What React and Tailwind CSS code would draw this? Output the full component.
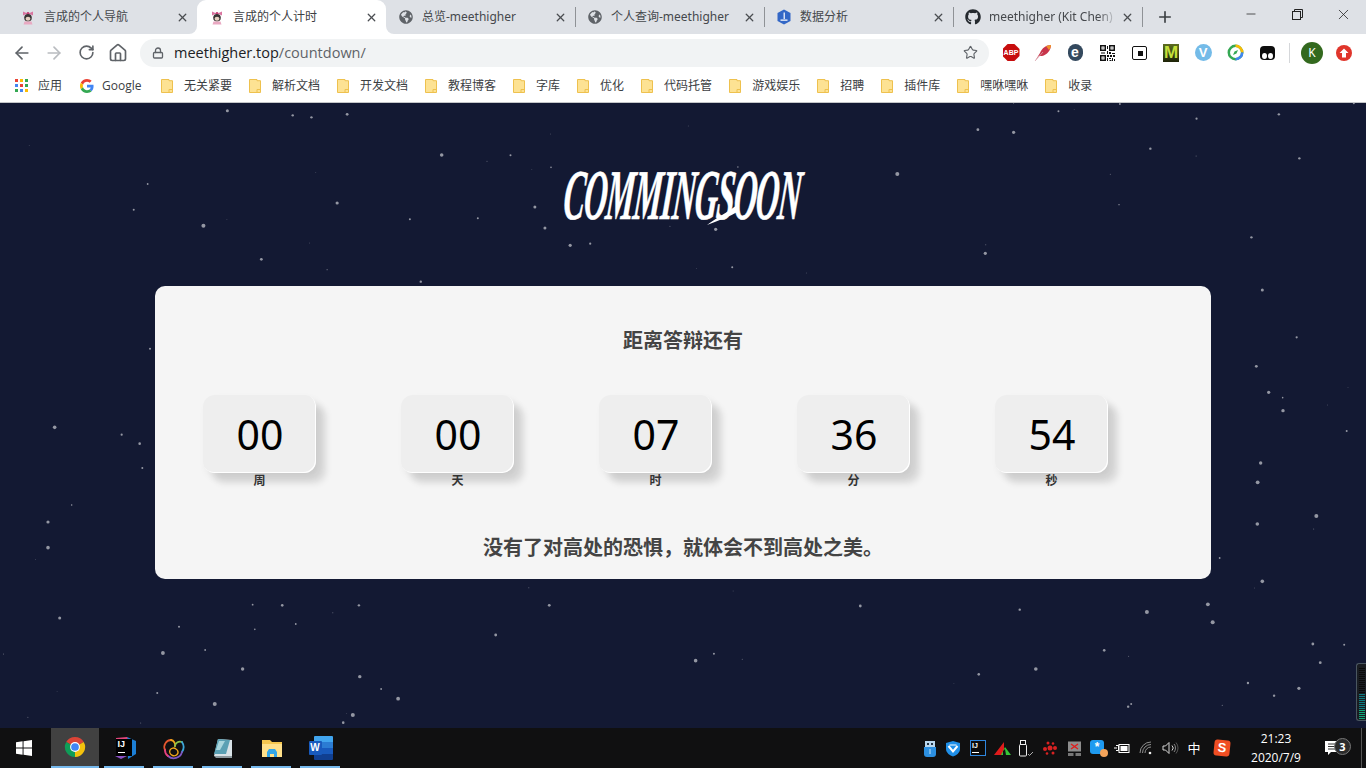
import React from "react";
import { ArrowLeft, ArrowRight, RotateCw, Home, Lock, Star, X, Plus, Minus } from "lucide-react";
import { FaGithub, FaGlobeAmericas } from "react-icons/fa";

const S1 = 1 / 2.2958, S3 = 1 / 3;
const raw = [
  [0, 102, S1, [[522,26,1.5],[672,40,1.2],[715,46,1.2],[797,37,1.4],[67,130,.4],[1014,159,1.8],[1172,160,1],[1118,178,.5],[1264,96,.4],[1221,202,.4],[1265,196,.8],[725,212,.4],[339,246,.9],[307,323,1],[774,303,1.6],[1228,315,1.5],[941,352,1],[1097,349,1],[521,352,.4],[467,371,2],[1251,378,1.5],[1538,373,.5],[711,423,.4],[1309,430,1.6],[1355,425,1.1],[600,472,1.4],[751,503,.6],[966,539,1.2]]],
  [683, 102, S1, [[759,4,.5],[1003,6,.9],[1540,4,1],[862,28,1],[898,22,.4],[1179,50,1.1],[1368,37,1.2],[12,72,.4],[677,83,1.4],[759,91,1.6],[1073,140,1.2],[1178,162,.5],[1415,169,1.2],[492,216,2],[981,217,.5],[126,195,.7],[153,332,.8],[1001,308,.7],[75,382,1.6],[1305,406,1.2],[695,428,.5],[694,454,1.6],[31,499,.4],[113,496,1],[283,513,.4]]],
  [0, 286, S3, [[450,188,1],[164,424,1.8],[365,446,1.1],[419,473,1.3],[427,546,1],[215,657,.8],[144,708,1.6],[144,785,1.8],[106,821,.4]]],
  [1211, 286, S3, [[154,12,1.5],[257,154,1.1],[136,241,1.4],[411,305,.4],[173,319,1.6],[215,335,.8],[349,357,.4],[216,374,1.7],[407,435,1],[149,531,1.7],[140,589,1.9],[316,690,2],[308,729,.5],[139,714,1.8],[26,816,.9]]],
  [0, 579, S1, [[1214,26,.5],[580,77,.9],[648,79,1.3],[824,79,1.2],[1261,79,1.4],[764,101,.5],[137,117,1.5],[411,143,1],[679,135,.9],[585,151,.8],[1138,168,1.4],[374,222,1.9],[471,213,.9],[8,225,.5],[557,270,1.7],[826,293,1.7],[875,330,.9],[131,338,.3],[361,342,1],[493,375,2],[914,359,1.9],[810,408,2],[796,403,.4],[64,415,.5],[323,432,.5],[788,431,1.3]]],
  [683, 579, S1, [[115,36,.4],[1330,7,1.8],[1312,27,.4],[407,81,1.4],[773,92,1.2],[1065,99,2],[1205,76,1.9],[1216,130,2],[1446,195,1.4],[1518,197,1],[967,214,1.3],[1023,232,.5],[71,224,1],[29,245,1.8],[136,241,.5],[810,270,1.8],[679,286,1.3],[622,314,.3],[1463,251,1.4],[1297,312,1.2],[1414,328,1.6],[1357,350,1.2],[1029,375,1],[1022,383,1.2],[1238,379,.6]]],
];
const stars = raw.flatMap(([ox, oy, sx, list]) =>
  list.map(([x, y, r]) => ({ x: ox + x * sx, y: oy + y * S3, r }))
);

const CJK = "font-['Noto_Sans','Noto_Sans_CJK_SC',sans-serif]";

function Minnie() {
  return (
    <svg width="16" height="16" viewBox="0 0 16 16" className="shrink-0">
      <path d="M3 2.500 L7.500 4.500 L3 6.500Z M13 2.500 L8.500 4.500 L13 6.500Z" fill="#d9749f" />
      <circle cx="8" cy="4.400" r="1.400" fill="#c23f75" />
      <circle cx="8" cy="8.800" r="3.800" fill="#3a3535" />
      <ellipse cx="8" cy="9.800" rx="2.400" ry="2" fill="#e3cfc0" />
      <path d="M4.500 12.500h7l1 3h-9z" fill="#e9a9c2" />
    </svg>
  );
}

function Analysis() {
  return (
    <svg width="16" height="16" viewBox="0 0 16 16" className="shrink-0">
      <path d="M8 0.500 L14.500 4 L14.500 12 L8 15.500 L1.500 12 L1.500 4Z" fill="#3367c6" />
      <path d="M7.600 3.500h1.200v6.500H7.600z M4.500 10.500h7v1.200h-7z" fill="#fff" />
    </svg>
  );
}

const tabs = [
  { t: "言成的个人导航", i: <Minnie /> },
  { t: "言成的个人计时", i: <Minnie />, active: true },
  { t: "总览-meethigher", i: <FaGlobeAmericas size={14} className="text-[#5f6368] shrink-0 mx-px" />, sep: true },
  { t: "个人查询-meethigher", i: <FaGlobeAmericas size={14} className="text-[#5f6368] shrink-0 mx-px" />, sep: true },
  { t: "数据分析", i: <Analysis />, sep: true },
  { t: "meethigher (Kit Chen)", i: <FaGithub size={16} className="text-[#24292e] shrink-0" />, sep: true, fade: true },
];

function Tab({ t, i, active, sep, fade }) {
  return (
    <div className={`relative w-[189px] h-[34px] flex items-center pl-3 ${active ? "bg-white rounded-t-[9px]" : ""}`}>
      {i}
      <span className={`ml-2 w-[128px] overflow-hidden whitespace-nowrap text-[12px] leading-4 ${active ? "text-[#3c4043]" : "text-[#45484c]"} ${fade ? "[mask-image:linear-gradient(to_right,black_85%,transparent)]" : ""}`}>{t}</span>
      <X size={13} strokeWidth={2.4} className="absolute right-[8.5px] text-[#4a4d51]" />
      {sep && <span className="absolute -right-px top-[7px] h-5 w-px bg-[#8f9296]" />}
      {active && (
        <>
          <span className="absolute -left-2 bottom-0 w-2 h-2 bg-white"><span className="block w-2 h-2 bg-[#dee1e6] rounded-br-lg" /></span>
          <span className="absolute -right-2 bottom-0 w-2 h-2 bg-white"><span className="block w-2 h-2 bg-[#dee1e6] rounded-bl-lg" /></span>
        </>
      )}
    </div>
  );
}

const Ext = ({ children }) => <div className="w-8 h-8 flex items-center justify-center shrink-0">{children}</div>;

function Folder() {
  return (
    <svg width="12" height="14" viewBox="0 0 12 14" className="shrink-0">
      <path d="M0.500 0.500h7.500v1.200h3.500v11.800h-11z" fill="#fde293" stroke="#eec14e" />
      <path d="M8 13v-2.500h3" fill="none" stroke="#eec14e" />
    </svg>
  );
}

const bookmarks = ["无关紧要","解析文档","开发文档","教程博客","字库","优化","代码托管","游戏娱乐","招聘","插件库","嘿咻嘿咻","收录"];

function Apps() {
  const c = ["#ea4335","#fbbc04","#34a853","#4285f4","#ea4335","#34a853","#34a853","#4285f4","#fbbc04"];
  return (
    <div className="grid grid-cols-3 gap-[2px] w-[13px] shrink-0">
      {c.map((x, i) => <span key={i} className="w-[3px] h-[3px]" style={{ background: x }} />)}
    </div>
  );
}

function GoogleG() {
  return (
    <svg width="14" height="14" viewBox="0 0 48 48" className="shrink-0">
      <path fill="#EA4335" d="M24 9.500c3.500 0 6.700 1.300 9.100 3.500l6.800-6.800C35.800 2.400 30.300 0 24 0 14.600 0 6.500 5.400 2.600 13.200l7.900 6.200C12.400 13.700 17.700 9.500 24 9.500z" />
      <path fill="#4285F4" d="M46.500 24.500c0-1.600-.1-3.100-.4-4.500H24v9h12.700c-.6 2.900-2.200 5.400-4.700 7l7.600 5.900c4.400-4.100 6.900-10.100 6.900-17.400z" />
      <path fill="#FBBC05" d="M10.500 28.600c-.5-1.400-.8-3-.8-4.600s.3-3.200.8-4.600l-7.900-6.200C.9 16.500 0 20.100 0 24s.9 7.500 2.600 10.800l7.900-6.200z" />
      <path fill="#34A853" d="M24 48c6.500 0 11.900-2.100 15.900-5.800L32.300 36.300c-2.100 1.400-4.900 2.300-8.300 2.300-6.300 0-11.600-4.200-13.500-9.900l-7.900 6.200C6.500 42.600 14.600 48 24 48z" />
    </svg>
  );
}

function ChromeIcon() {
  return (
    <svg width="22" height="22" viewBox="0 0 24 24">
      <path d="M12 12 L2.470 6.500 A11 11 0 0 1 21.530 6.500Z" fill="#db4437" />
      <path d="M12 12 L21.530 6.500 A11 11 0 0 1 12 23Z" fill="#f4c20d" />
      <path d="M12 12 L12 23 A11 11 0 0 1 2.470 6.500Z" fill="#0f9d58" />
      <circle cx="12" cy="12" r="5.400" fill="#fff" />
      <circle cx="12" cy="12" r="4.200" fill="#4285f4" />
    </svg>
  );
}

function IdeaIcon() {
  return (
    <div className="relative w-6 h-6">
      <svg width="24" height="24" viewBox="0 0 24 24" className="absolute inset-0">
        <path d="M14 1 L23 5 L23 18 L15 23Z" fill="#1c7fd6" />
        <path d="M3 2 L14 1 L16 8 L3 20Z" fill="#e0457b" />
        <path d="M2 20 L8 23 L14 20Z" fill="#8a4fc2" />
      </svg>
      <div className="absolute left-[3px] top-[3px] w-[16px] h-[17px] bg-black text-white font-['Liberation_Sans'] font-bold text-[9px] leading-[11px] pl-[2px]">IJ</div>
      <span className="absolute left-[5px] top-[16px] w-[7px] h-px bg-white" />
    </div>
  );
}

function NetIcon() {
  return (
    <svg width="24" height="24" viewBox="0 0 24 24" fill="none" strokeWidth="1.800" strokeLinecap="round">
      <path d="M3 14 A7 7 0 0 1 9 4" stroke="#e4572e" />
      <path d="M9 4 A5 5 0 0 1 13 10" stroke="#f2a71b" />
      <path d="M13 10 A5 5 0 0 1 20 6" stroke="#8bc34a" />
      <path d="M20 6 A9 9 0 0 1 20 16" stroke="#3ba7d9" />
      <path d="M20 16 A8.500 8.500 0 0 1 6 20" stroke="#7e57c2" />
      <path d="M6 20 A7 7 0 0 1 3 14" stroke="#e8417e" />
      <path d="M8 14 A4 4 0 0 1 14 13 A4 4 0 0 1 16 17 A4 4 0 0 1 8 14" stroke="#f2a71b" strokeWidth="1.400" />
    </svg>
  );
}

function NoteIcon() {
  return (
    <svg width="24" height="24" viewBox="0 0 24 24">
      <path d="M7 3 L21 4 L21 20 L3 20Z" fill="#d9e3e8" />
      <path d="M7 3 L19 4 L15 18 L3 18Z" fill="#5aa0b4" />
      <path d="M8 5 L14 5 L9 14 L5 14Z" fill="#a9d6de" />
      <path d="M3 20 L21 20 L21 22 L5 22Z" fill="#8c989e" />
    </svg>
  );
}

function FolderTask() {
  return (
    <svg width="24" height="24" viewBox="0 0 24 24">
      <path d="M2 4h8l2 2h10v15H2z" fill="#f5c64f" />
      <path d="M2 8h20v13H2z" fill="#ffe08a" />
      <path d="M7 16h10v5H7z" fill="#33a6e8" />
      <path d="M7 16l2-3h6l2 3z" fill="#33a6e8" />
      <path d="M10 18h4v3h-4z" fill="#ffe08a" />
    </svg>
  );
}

function WordIcon() {
  return (
    <div className="relative w-6 h-6">
      <div className="absolute right-0 top-0 w-[19px] h-6 rounded-[1px] overflow-hidden flex flex-col">
        <span className="flex-1 bg-[#41a5ee]" />
        <span className="flex-1 bg-[#2b7cd3]" />
        <span className="flex-1 bg-[#185abd]" />
        <span className="flex-1 bg-[#103f91]" />
      </div>
      <div className="absolute left-0 top-[5px] w-[13px] h-[14px] bg-[#185abd] rounded-[1px] text-white text-[10px] leading-[14px] font-bold text-center font-['Liberation_Sans']">W</div>
    </div>
  );
}

const taskItems = [<IdeaIcon />, <NetIcon />, <NoteIcon />, <FolderTask />, <WordIcon />];

const tray = [
  <svg width="14" height="17" viewBox="0 0 14 17"><path d="M1 7h12v7a3 3 0 0 1-3 3H4a3 3 0 0 1-3-3z" fill="#2c8fe0" /><rect x="2" y="1" width="10" height="6" fill="#b8d6ee" /><rect x="4" y="3" width="2" height="2" fill="#234" /><rect x="8" y="3" width="2" height="2" fill="#234" /><path d="M7 9v5" stroke="#bfe0f8" /></svg>,
  <svg width="16" height="17" viewBox="0 0 16 17" className="-ml-[3px]"><path d="M8 1 L15 3 V9 C15 13 11 15.500 8 16.500 C5 15.500 1 13 1 9 V3Z" fill="#1f8fe8" /><path d="M3.500 6 L8 11.500 L12.500 6" fill="none" stroke="#fff" strokeWidth="2" /><path d="M4.500 5h7" stroke="#fff" /></svg>,
  <div className="w-[16px] h-[16px] bg-[#0b0b0b] border border-[#2f86dd] text-white text-[7px] leading-[9px] pl-px font-bold font-['Liberation_Sans']">IJ<span className="block w-[7px] h-px bg-white mt-[2px]" /></div>,
  <svg width="17" height="15" viewBox="0 0 17 15"><path d="M0 14 L10 1 L10 14Z" fill="#e01b1b" /><path d="M7 14 L11 6 L17 14Z" fill="#37c737" /><path d="M9 10 L11 8 L12 14 L9 14Z" fill="#111" /></svg>,
  <svg width="16" height="17" viewBox="0 0 16 17" fill="none" stroke="#eee"><rect x="2.500" y="0.500" width="5" height="4" /><rect x="1.500" y="4.500" width="7" height="11.500" rx="1" /><path d="M10 14 L11.500 15.500 L15 12" stroke="#aaa" /></svg>,
  <svg width="16" height="14" viewBox="0 0 16 14" fill="#d82222"><circle cx="8" cy="7" r="2.500" /><circle cx="3" cy="8" r="2" /><circle cx="13" cy="7" r="2" /><circle cx="6" cy="2" r="1.500" /><circle cx="11" cy="2.500" r="1.300" /><circle cx="5" cy="12.500" r="1.300" /><circle cx="11" cy="12" r="1.500" /></svg>,
  <svg width="15" height="15" viewBox="0 0 15 15"><rect x="1" y="0.500" width="13" height="10" fill="#8d8d8d" /><path d="M4 3 L11 8 M11 3 L4 8" stroke="#e01b1b" strokeWidth="1.400" /><rect x="1" y="12" width="5.500" height="3" fill="#777" /><rect x="8.500" y="12" width="5.500" height="3" fill="#777" /></svg>,
  <div className="relative w-4 h-4"><div className="w-[14px] h-[14px] rounded-[3px] bg-[#1e9af0] text-white text-[12px] leading-[14px] text-center font-bold font-['Liberation_Sans']">*</div><span className="absolute -right-[2px] -bottom-[1px] w-[8px] h-[8px] rounded-full bg-[#f3a35a]" /></div>,
  <svg width="16" height="12" viewBox="0 0 16 12"><rect x="5" y="2.500" width="10" height="8" fill="none" stroke="#fff" /><rect x="6.500" y="4" width="7" height="5" fill="#fff" /><path d="M0 6h3M2 3.500h2.500v5H2" stroke="#fff" fill="none" /></svg>,
  <svg width="14" height="14" viewBox="0 0 14 14" fill="none" stroke="#8f8f8f"><path d="M1 12 A11 11 0 0 1 12 1" /><path d="M3.500 12 A8.500 8.500 0 0 1 12 3.500" /><path d="M6 12 A6 6 0 0 1 12 6" /><circle cx="11" cy="12" r="1.300" fill="#eee" stroke="none" /></svg>,
  <svg width="17" height="14" viewBox="0 0 17 14" fill="none" stroke="#d8d8d8"><path d="M1 5h2.500L7 1.500v11L3.500 9H1z" /><path d="M10 4.500a3.500 3.500 0 0 1 0 5" /><path d="M12 3a6 6 0 0 1 0 8" stroke="#888" /><path d="M14 1.500a8.500 8.500 0 0 1 0 11" stroke="#555" /></svg>,
  <span className={`text-white text-[13px] leading-none ${CJK}`}>中</span>,
];

function Scale() {
  const bars = Array.from({ length: 27 }, (_, i) => i);
  return (
    <div className="absolute right-0 top-[560px] w-[10px] h-[58px] rounded-l-[3px] border border-r-0 border-[#4a5660] bg-[#1a1d22] flex flex-col gap-px pl-[2px] pt-[4px] overflow-hidden">
      {bars.map((b) => (
        <span key={b} className={`h-px w-[6px] shrink-0 ${b < 13 ? "bg-[#0b0b0b]" : b < 21 ? "bg-[#0e7b80]" : "bg-[#0fa779]"}`} />
      ))}
    </div>
  );
}

export default function App() {
  const cols = [["00","周"],["00","天"],["07","时"],["36","分"],["54","秒"]];
  return (
    <div className={`w-[1366px] h-[768px] overflow-hidden flex flex-col ${CJK}`}>
      {/* tab strip */}
      <div className="h-[34px] bg-[#dee1e6] flex items-start pl-2 shrink-0">
        {tabs.map((t, i) => <Tab key={i} {...t} />)}
        <div className="ml-[14px] h-[34px] flex items-center"><Plus size={18} strokeWidth={2.2} className="text-[#3c4043]" /></div>
        <div className="ml-auto flex">
          <div className="w-[46px] h-[28px] flex items-center justify-center"><Minus size={14} strokeWidth={1.3} className="text-[#222]" /></div>
          <div className="w-[46px] h-[28px] flex items-center justify-center">
            <svg width="11" height="11" viewBox="0 0 11 11" fill="none" stroke="#222"><rect x="0.500" y="2.500" width="8" height="8" /><path d="M2.500 2.500V0.500H10.500V8.500H8.500" /></svg>
          </div>
          <div className="w-[46px] h-[28px] flex items-center justify-center"><X size={17} strokeWidth={1.1} className="text-[#222]" /></div>
        </div>
      </div>

      {/* toolbar */}
      <div className="h-[37px] bg-white flex items-center pl-[6px] shrink-0">
        <div className="w-8 flex justify-center"><ArrowLeft size={20} strokeWidth={2} className="text-[#5f6368]" /></div>
        <div className="w-8 flex justify-center"><ArrowRight size={20} strokeWidth={2} className="text-[#b9bcc0]" /></div>
        <div className="w-8 flex justify-center"><RotateCw size={17} strokeWidth={2.3} className="text-[#5f6368]" /></div>
        <div className="w-8 flex justify-center"><Home size={20} strokeWidth={2} className="text-[#5f6368]" /></div>
        <div className="ml-[6px] w-[849px] h-7 rounded-full bg-[#f1f3f4] flex items-center pl-[12px] pr-[11px] shrink-0">
          <Lock size={12} strokeWidth={2.6} className="text-[#5f6368] shrink-0" />
          <span className="ml-[10px] text-[14.5px] leading-5 text-[#202124] font-['Open_Sans','Noto_Sans',sans-serif]">meethigher.top<span className="text-[#5f6368]">/countdown/</span></span>
          <Star size={15} strokeWidth={1.8} className="ml-auto text-[#5f6368]" />
        </div>
        <div className="ml-[6px] flex">
          <Ext>
            <div className="w-[17px] h-[17px] bg-[#c70d0d] [clip-path:polygon(30%_0,70%_0,100%_30%,100%_70%,70%_100%,30%_100%,0_70%,0_30%)] text-white text-[7px] leading-[17px] font-bold text-center font-['Liberation_Sans']">ABP</div>
          </Ext>
          <Ext>
            <svg width="18" height="18" viewBox="0 0 18 18"><path d="M1 17 L6 9 C8 4 12 1 17 1 C17 6 13 11 8 12 L5 12Z" fill="#c8344a" /><path d="M12 2 C14 1.500 16 1 17 1 C17 3 16 5 15 6Z" fill="#f0932b" /><path d="M1 17 L9 8" stroke="#d5a6b0" strokeWidth="0.800" /></svg>
          </Ext>
          <Ext>
            <div className="w-[15px] h-[17px] rounded-full bg-[#34495e] text-white text-[14px] leading-[16px] font-bold text-center font-['Liberation_Sans']">e</div>
          </Ext>
          <Ext>
            <svg width="15" height="16" viewBox="0 0 15 16" fill="#111"><path d="M0 0h6v6H0z M1.500 1.500v3h3v-3z M9 0h6v6H9z M10.500 1.500v3h3v-3z M0 10h6v6H0z M1.500 11.500v3h3v-3z" fillRule="evenodd" /><path d="M2.500 2.500h1v1h-1z M11.500 2.500h1v1h-1z M2.500 12.500h1v1h-1z M7 1h1v3H7z M7 6h1v3H7z M1 7.500h4v1H1z M9 7h2v2H9z M12 8h3v1h-3z M7 10h2v2H7z M10 10h2v2h-2z M13 10h2v2h-2z M7 13h1v3H7z M9 13h2v1H9z M12 13h1v3h-1z M9.500 15h2v1h-2z M14 14h1v2h-1z" /></svg>
          </Ext>
          <Ext>
            <div className="w-[15px] h-[14px] rounded-[2px] border-[1.5px] border-[#111] flex items-center justify-center"><span className="w-[5px] h-[5px] bg-[#111] ml-[2px] mt-[2px]" /></div>
          </Ext>
          <Ext>
            <div className="w-[16px] h-[18px] bg-gradient-to-b from-[#5d6d20] to-[#1e2408] text-[#c5e03a] text-[17px] leading-[18px] font-bold text-center font-['Liberation_Sans'] overflow-hidden">M</div>
          </Ext>
          <Ext>
            <div className="w-[17px] h-[17px] rounded-full bg-[#74bbe8] text-white text-[13px] leading-[17px] font-bold text-center font-['Liberation_Sans']">V</div>
          </Ext>
          <Ext>
            <svg width="17" height="17" viewBox="0 0 17 17"><circle cx="8.500" cy="8.500" r="6.700" fill="#fff" stroke="#34a853" strokeWidth="2.500" /><path d="M8.500 1.800 A6.700 6.700 0 0 1 15.200 8.500" fill="none" stroke="#fbbc04" strokeWidth="2.500" /><path d="M15.200 8.500 A6.700 6.700 0 0 1 8.500 15.200" fill="none" stroke="#4285f4" strokeWidth="2.500" /><path d="M11 6 L9.500 9.500 L6 11 L7.500 7.500Z" fill="#34a853" /></svg>
          </Ext>
          <Ext>
            <svg width="15" height="14" viewBox="0 0 15 14"><rect x="0" y="0" width="15" height="14" rx="4" fill="#0d0d0d" /><ellipse cx="4.500" cy="10" rx="2.500" ry="3" fill="#fff" /><ellipse cx="10.500" cy="10" rx="2.500" ry="3" fill="#fff" /></svg>
          </Ext>
        </div>
        <span className="ml-[6px] w-px h-[20px] bg-[#d5d7da]" />
        <div className="ml-[6px] flex">
          <Ext>
            <div className="w-[22px] h-[22px] rounded-full bg-[#33691e] text-white text-[12px] leading-[22px] text-center">K</div>
          </Ext>
          <Ext>
            <div className="w-[16px] h-[16px] rounded-full bg-[#e0352b] flex items-center justify-center">
              <svg width="10" height="10" viewBox="0 0 10 10"><path d="M5 0.500 L9.500 5 H7 V9.500 H3 V5 H0.500Z" fill="#fff" /></svg>
            </div>
          </Ext>
        </div>
      </div>

      {/* bookmarks */}
      <div className="h-[32px] bg-white border-b border-[#c4c6c9] flex items-center gap-[17px] pl-[15px] pb-[2px] shrink-0 text-[12px] leading-4 text-[#3c4043]">
        <div className="flex items-center gap-[10px] mr-px"><Apps /><span>应用</span></div>
        <div className="flex items-center gap-[8px]"><GoogleG /><span className="w-[42px] font-['Open_Sans'] text-[12px]">Google</span></div>
        {bookmarks.map((b) => (
          <div key={b} className="flex items-center gap-[11px]"><Folder /><span>{b}</span></div>
        ))}
      </div>

      {/* page */}
      <main className="relative flex-1 bg-[#131933] flex flex-col items-center overflow-hidden">
        <svg className="absolute inset-0" width="1366" height="625" viewBox="0 103 1366 625">
          {stars.map((s, i) => (
            <circle key={i} cx={s.x} cy={s.y} r={s.r} fill="#fff" fillOpacity={s.r < 0.7 ? 0.4 : 0.55} />
          ))}
        </svg>

        <div className="relative mt-[62px] h-[60px] w-[240px] flex justify-center items-center">
          <span className="whitespace-nowrap text-white font-['Liberation_Serif'] italic font-bold text-[68px] leading-[60px] tracking-[-2px] [-webkit-text-stroke:0.6px_white] scale-x-[0.47] scale-y-[1.05] -skew-x-[12deg]">COMMINGSOON</span>
          <svg className="absolute left-[140px] top-[34px]" width="50" height="28" viewBox="0 0 50 28"><path d="M4 26 C14 18 24 14 34 6 L36 12 C26 18 14 22 4 26Z" fill="#fff" /></svg>
        </div>

        <section className="relative mt-[61px] w-[1056px] h-[293px] rounded-[10px] bg-[#f5f5f5] flex flex-col">
          <h1 className="mt-[41px] text-center text-[20px] leading-[28px] font-bold text-[#444]">距离答辩还有</h1>
          <div className="mt-[40px] pl-[48px] flex gap-[85px]">
            {cols.map(([n, l], i) => (
              <div key={i} className="w-[113px] flex flex-col items-center">
                <div className="w-[113px] h-[78px] rounded-[12px] bg-[#eeeeee] pl-px flex items-center justify-center text-[41px] leading-none text-black font-['Noto_Sans'] shadow-[inset_-1px_-1px_0_#ffffff,10px_10px_7px_rgba(0,0,0,0.11),4px_5px_9px_rgba(0,0,0,0.07)]">{n}</div>
                <span className="relative pt-px text-[12px] leading-[14px] font-bold text-[#333]">{l}</span>
              </div>
            ))}
          </div>
          <p className="mt-[46px] text-center text-[20px] leading-[28px] font-bold text-[#444]">没有了对高处的恐惧，就体会不到高处之美。</p>
        </section>

        <Scale />
      </main>

      {/* taskbar */}
      <footer className="h-[40px] bg-[#101011] flex items-stretch shrink-0">
        <div className="w-[51px] pr-[3px] flex items-center justify-center">
          <svg width="16" height="16" viewBox="0 0 17 17" fill="#fff"><path d="M0 2.400 L7 1.400 V8 H0Z M8 1.200 L17 0 V8 H8Z M0 9 H7 V15.600 L0 14.600Z M8 9 H17 V17 L8 15.800Z" /></svg>
        </div>
        <div className="w-[48px] bg-[#414141] border-b-[2px] border-[#76b9ed] flex items-center justify-center"><ChromeIcon /></div>
        <div className="flex ml-[1px]">
          {taskItems.map((it, i) => (
            <div key={i} className="w-[49px] relative flex items-center justify-center">
              {it}
              <span className="absolute bottom-0 left-[4px] w-[40px] h-[2px] bg-[#76b9ed]" />
            </div>
          ))}
        </div>
        <div className="ml-auto flex items-center">
          {tray.map((it, i) => <div key={i} className="w-6 flex items-center justify-center">{it}</div>)}
          <div className="ml-[8px] w-[16px] h-[16px] rounded-[3px] bg-[#f04e23] rotate-6 text-white text-[13px] leading-[16px] text-center font-bold font-['Liberation_Sans']">S</div>
          <div className="ml-[8px] w-[76px] flex flex-col items-center text-white text-[12px] leading-[19px] font-['Open_Sans']">
            <span>21:23</span>
            <span>2020/7/9</span>
          </div>
          <div className="relative w-[38px] flex items-center justify-center">
            <svg width="17" height="15" viewBox="0 0 17 15"><path d="M0 0h16v11H6l-3 3v-3H0z" fill="#fff" /><path d="M3 3h10M3 5.500h10M3 8h7" stroke="#333" /></svg>
            <span className="absolute left-[20px] top-[-3px] w-[17px] h-[17px] rounded-full bg-[#2b2b2b] border border-[#777] text-white text-[11px] leading-[15px] text-center font-bold font-['Open_Sans']">3</span>
          </div>
          <span className="ml-[9px] mr-[4px] w-px h-full bg-[#555]" />
        </div>
      </footer>
    </div>
  );
}
